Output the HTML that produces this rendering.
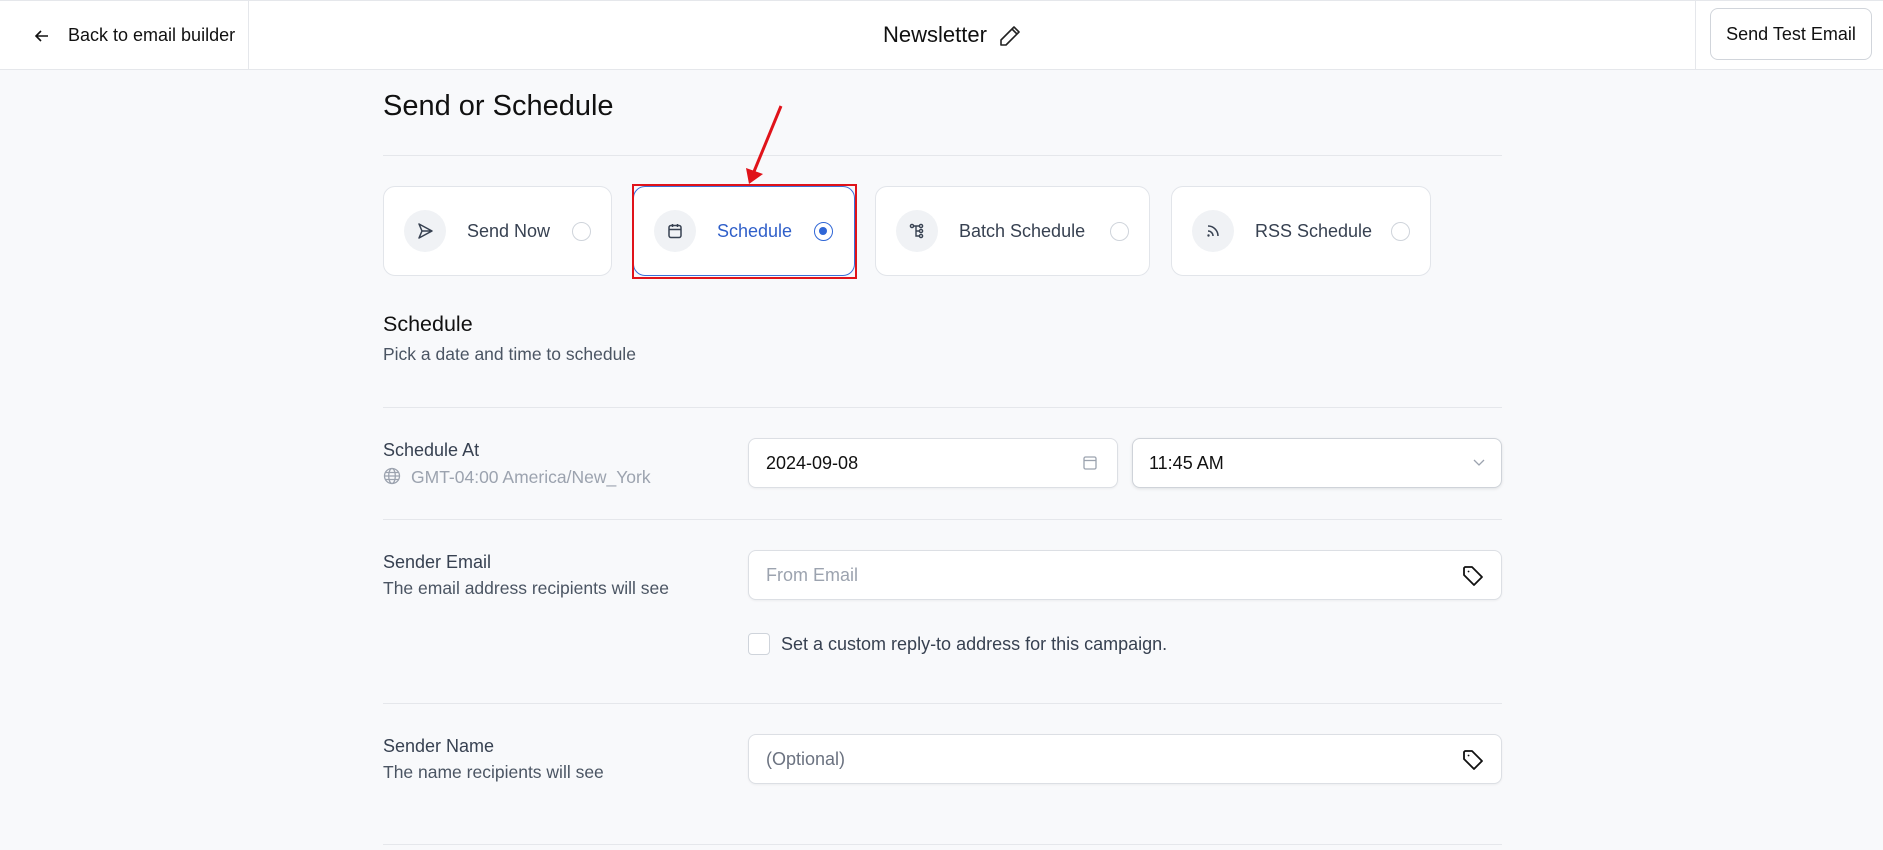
<!DOCTYPE html>
<html><head><meta charset="utf-8"><style>
*{box-sizing:border-box;margin:0;padding:0}
body{width:1883px;height:850px;overflow:hidden;background:#f8f9fb;font-family:"Liberation Sans",sans-serif;position:relative;color:#111827}
.a{position:absolute}
.hdr{left:0;top:0;width:1883px;height:70px;background:#fff;border-bottom:1px solid #e5e7eb;border-top:1px solid #e5e7eb}
.hr{height:1px;background:#e5e7eb;left:383px;width:1119px}
.card{background:#fff;border:1px solid #e2e5ea;border-radius:12px;height:90px;top:186px}
.ic{width:42px;height:42px;border-radius:50%;background:#f0f2f5;top:23px;left:20px;display:flex;align-items:center;justify-content:center}
.lbl{font-size:18px;color:#374151;top:34px}
.rad{width:19px;height:19px;border:1.5px solid #cfd4db;border-radius:50%;top:35px}
.inp{background:#fff;border:1px solid #dcdfe4;border-radius:8px;height:50px;box-shadow:0 1px 2px rgba(0,0,0,.05)}
.t1{font-size:18px;color:#374151}
.t2{font-size:17.5px;color:#4b5563}
</style></head><body>
<div class="a hdr"></div>
<svg class="a" style="left:34px;top:28px" width="16" height="16" viewBox="0 0 16 16"><path d="M14 8H2M7 3L2 8l5 5" fill="none" stroke="#111" stroke-width="1.6"/></svg>
<div class="a" style="left:68px;top:25px;font-size:18px;color:#111">Back to email builder</div>
<div class="a" style="left:248px;top:0;width:1px;height:70px;background:#e5e7eb"></div>
<div class="a" style="left:883px;top:22px;font-size:22px;color:#111">Newsletter</div>
<svg class="a" style="left:998px;top:24px" width="24" height="24" viewBox="0 0 24 24"><path d="M16 3l5 5L8 21H3v-5zM14 5l5 5" fill="none" stroke="#222" stroke-width="1.6" stroke-linejoin="round"/></svg>
<div class="a" style="left:1695px;top:0;width:1px;height:70px;background:#e5e7eb"></div>
<div class="a" style="left:1710px;top:8px;width:162px;height:52px;border:1px solid #d1d5db;border-radius:8px;background:#fff;font-size:18px;color:#111;text-align:center;line-height:50px">Send Test Email</div>

<div class="a" style="left:383px;top:90px;font-size:29px;color:#111">Send or Schedule</div>
<div class="a hr" style="top:155px"></div>

<div class="a card" style="left:383px;width:229px"><div class="a ic"><svg width="18" height="18" viewBox="0 0 18 18"><path d="M3 2l13 7-13 7 3-7z M6 9h10" fill="none" stroke="#374151" stroke-width="1.5" stroke-linejoin="round"/></svg></div><div class="a lbl" style="left:83px">Send Now</div><div class="a rad" style="left:188px"></div></div>
<div class="a card" style="left:633px;width:222px;border-color:#3b6fd8"><div class="a ic"><svg width="18" height="18" viewBox="0 0 18 18"><rect x="3" y="3.5" width="12" height="12" rx="2" fill="none" stroke="#374151" stroke-width="1.5"/><path d="M3 7.5h12M6.5 2v3M11.5 2v3" stroke="#374151" stroke-width="1.5"/></svg></div><div class="a lbl" style="left:83px;color:#2f5fc9">Schedule</div><div class="a rad" style="left:180px;border-color:#2f66d6"><div style="width:8px;height:8px;border-radius:50%;background:#2f66d6;margin:4px"></div></div></div>
<div class="a" style="left:632px;top:184px;width:225px;height:95px;border:2px solid #e0131a"></div>
<div class="a card" style="left:875px;width:275px"><div class="a ic"><svg width="18" height="18" viewBox="0 0 18 18"><circle cx="4" cy="4" r="1.6" fill="none" stroke="#374151" stroke-width="1.4"/><circle cx="13" cy="4" r="1.6" fill="none" stroke="#374151" stroke-width="1.4"/><circle cx="13" cy="9" r="1.6" fill="none" stroke="#374151" stroke-width="1.4"/><circle cx="13" cy="14" r="1.6" fill="none" stroke="#374151" stroke-width="1.4"/><path d="M5.6 4h5.8M8 4v10h3.4M8 9h3.4" fill="none" stroke="#374151" stroke-width="1.4"/></svg></div><div class="a lbl" style="left:83px">Batch Schedule</div><div class="a rad" style="left:234px"></div></div>
<div class="a card" style="left:1171px;width:260px"><div class="a ic"><svg width="18" height="18" viewBox="0 0 18 18"><path d="M4 9a5 5 0 015 5M4 4a10 10 0 0110 10" fill="none" stroke="#374151" stroke-width="1.5"/><circle cx="4.5" cy="13.5" r="1.2" fill="#374151"/></svg></div><div class="a lbl" style="left:83px">RSS Schedule</div><div class="a rad" style="left:219px"></div></div>

<svg class="a" style="left:740px;top:100px" width="50" height="90" viewBox="0 0 50 90"><path d="M41 6L13 74" stroke="#e0131a" stroke-width="3"/><path d="M6 68l3 16 14-10z" fill="#e0131a"/></svg>

<div class="a" style="left:383px;top:312px;font-size:21.5px;color:#111">Schedule</div>
<div class="a t2" style="left:383px;top:344px">Pick a date and time to schedule</div>
<div class="a hr" style="top:407px"></div>

<div class="a t1" style="left:383px;top:440px">Schedule At</div>
<svg class="a" style="left:383px;top:467px" width="18" height="18" viewBox="0 0 18 18"><circle cx="9" cy="9" r="7.5" fill="none" stroke="#9ca3af" stroke-width="1.3"/><ellipse cx="9" cy="9" rx="3.3" ry="7.5" fill="none" stroke="#9ca3af" stroke-width="1.3"/><path d="M1.5 9h15M2.5 5.5h13M2.5 12.5h13" stroke="#9ca3af" stroke-width="1.2"/></svg>
<div class="a" style="left:411px;top:467px;font-size:17.5px;color:#9ca3af">GMT-04:00 America/New_York</div>
<div class="a inp" style="left:748px;top:438px;width:370px"><div class="a t1" style="left:17px;top:14px;color:#111">2024-09-08</div><svg class="a" style="left:332px;top:15px" width="18" height="18" viewBox="0 0 18 18"><rect x="3" y="3" width="12" height="12" rx="1.5" fill="none" stroke="#9ca3af" stroke-width="1.3"/><path d="M3 6.5h12" stroke="#9ca3af" stroke-width="1.3"/></svg></div>
<div class="a inp" style="left:1132px;top:438px;width:370px;border-color:#cfd3d9;box-shadow:0 1px 3px rgba(0,0,0,.1)"><div class="a t1" style="left:16px;top:14px;color:#111">11:45 AM</div><svg class="a" style="left:339px;top:18px" width="14" height="12" viewBox="0 0 14 12"><path d="M2 3l5 5 5-5" fill="none" stroke="#9ca3af" stroke-width="1.3"/></svg></div>
<div class="a hr" style="top:519px"></div>

<div class="a t1" style="left:383px;top:552px">Sender Email</div>
<div class="a t2" style="left:383px;top:578px">The email address recipients will see</div>
<div class="a inp" style="left:748px;top:550px;width:754px"><div class="a" style="left:17px;top:14px;font-size:18px;color:#9ca3af">From Email</div><svg class="a" style="left:712px;top:13px" width="24" height="24" viewBox="0 0 24 24"><path d="M3 4v7l10 10 8-8L11 3H4zM7.5 7.5h.1" fill="none" stroke="#111" stroke-width="1.8" stroke-linejoin="round" stroke-linecap="round"/></svg></div>
<div class="a" style="left:748px;top:633px;width:22px;height:22px;border:1.5px solid #cfd4db;border-radius:4px;background:#fff"></div>
<div class="a t1" style="left:781px;top:634px">Set a custom reply-to address for this campaign.</div>
<div class="a hr" style="top:703px"></div>

<div class="a t1" style="left:383px;top:736px">Sender Name</div>
<div class="a t2" style="left:383px;top:762px">The name recipients will see</div>
<div class="a inp" style="left:748px;top:734px;width:754px"><div class="a" style="left:17px;top:14px;font-size:18px;color:#6b7280">(Optional)</div><svg class="a" style="left:712px;top:13px" width="24" height="24" viewBox="0 0 24 24"><path d="M3 4v7l10 10 8-8L11 3H4zM7.5 7.5h.1" fill="none" stroke="#111" stroke-width="1.8" stroke-linejoin="round" stroke-linecap="round"/></svg></div>
<div class="a hr" style="top:844px"></div>
</body></html>
